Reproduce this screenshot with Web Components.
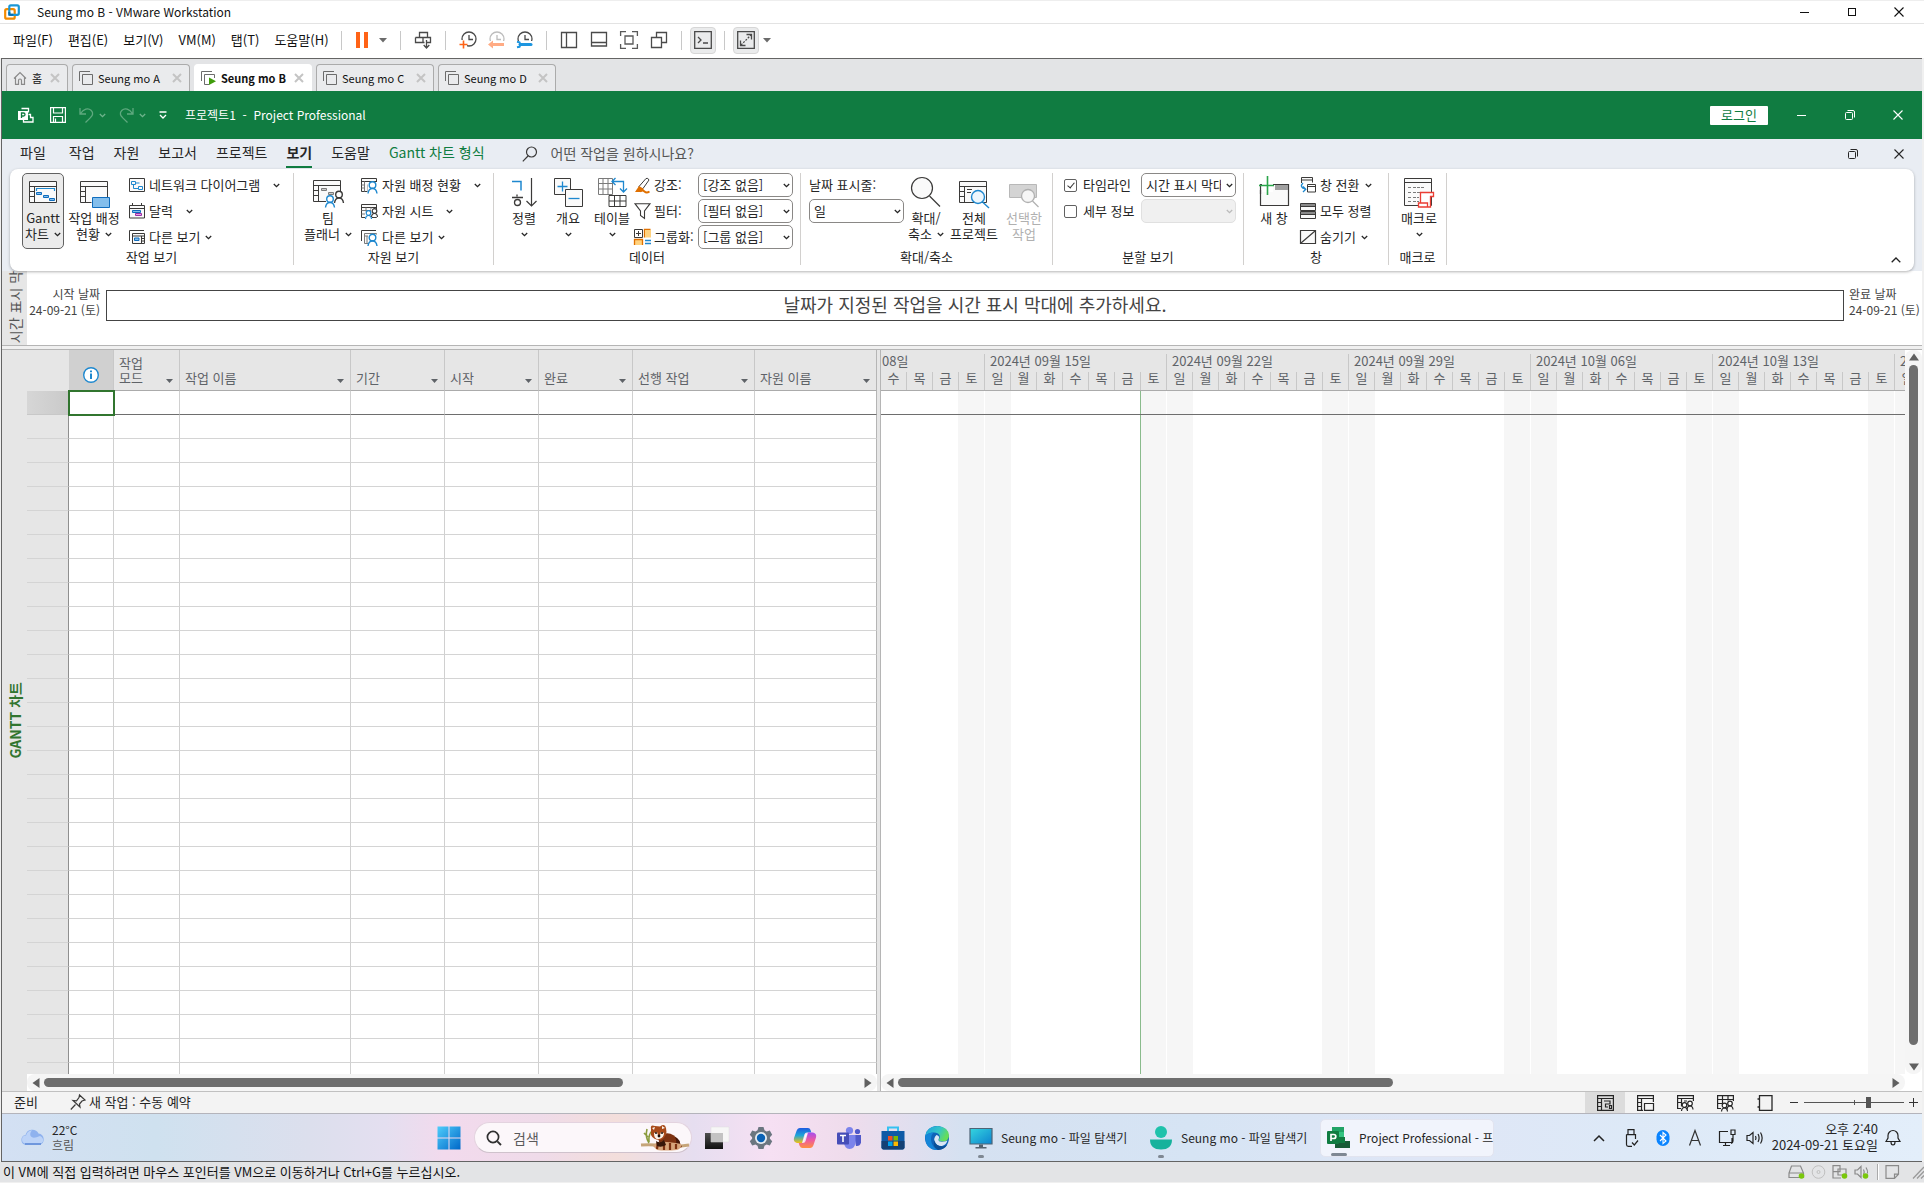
<!DOCTYPE html>
<html lang="ko">
<head>
<meta charset="utf-8">
<title>Seung mo B - VMware Workstation</title>
<style>
html,body{margin:0;height:100%}
body{font:13px/16px "Noto Sans CJK KR","Liberation Sans",sans-serif;font-feature-settings:"calt" 0;color:#262626;background:#f0f0f0;overflow:hidden}
</style>
</head>
<body>
<vm-window></vm-window>
<script>
const D='#3b3a39',B='#1e88cf',G='#7a7a7a';
const person=(x,y,c)=>`<circle cx="${x}" cy="${y}" r="3.3" fill="#fff" stroke="${c}" stroke-width="1.4"/><path d="M${x-4.5} ${y+8.5}c.4-3.4 2-5 4.500-5s4.100 1.600 4.500 5" fill="none" stroke="${c}" stroke-width="1.4"/>`;
const sperson=(x,y,c)=>`<circle cx="${x}" cy="${y}" r="2.300" fill="#fff" stroke="${c}" stroke-width="1.200"/><path d="M${x-3} ${y+6}c.2-2.400 1.200-3.500 3-3.500s2.800 1.100 3 3.500" fill="none" stroke="${c}" stroke-width="1.200"/>`;
const sheet=`<path d="M1.500 4.500h27v21h-27zM1.500 9.500h27M6.500 9.500v16M1.500 14.500h5M1.500 19.500h5" fill="#fafafa" stroke="${D}"/>`;
const tiny=`<path d="M.5 1.500h15v13H.5zM.5 4.500h15" fill="#fafafa" stroke="${D}"/>`;
const clock=c=>`<circle cx="10" cy="8" r="7" fill="none" stroke="${c}" stroke-width="1.300"/><path d="M10 4v4.500h4" fill="none" stroke="${c}" stroke-width="1.300"/>`;
const ICONS={
 vmware:[16,16,`<rect x="1.200" y="5.200" width="9.500" height="9.500" rx="1.500" fill="none" stroke="#f38b00" stroke-width="2.200"/><rect x="5.300" y="1.300" width="9.500" height="9.500" rx="1.500" fill="none" stroke="#1b97d5" stroke-width="2.200"/><path d="M5.300 8v2.800h4" fill="none" stroke="#0b6fae" stroke-width="2"/>`],
 min:[12,12,`<path d="M1 6.500h9" stroke="currentColor"/>`],
 max:[12,12,`<rect x="2.500" y="2.500" width="7" height="7" fill="none" stroke="currentColor"/>`],
 restore:[12,12,`<rect x="1.500" y="3.500" width="7" height="7" rx="1" fill="none" stroke="currentColor"/><path d="M3.500 1.500h5.500q1.500 0 1.500 1.500v5.500" fill="none" stroke="currentColor"/>`],
 close:[12,12,`<path d="M1.500 1.500l9 9M10.500 1.500l-9 9" stroke="currentColor" stroke-width="1.100"/>`],
 pause:[14,16,`<path d="M1 0h4v16H1zM9 0h4v16H9z" fill="#ff6316"/>`],
 tri:[8,5,`<path d="M0 0h8L4 4.500z" fill="#6b6b6b"/>`],
 send:[18,18,`<path d="M5.500 1.500h8v5h-8zM1.500 6.500h15v5h-4M1.500 6.500v5h9M9 6.500v5M12.500 9v7.500M9.700 14l2.800 3 2.800-3" fill="none" stroke="#4a4a4a" stroke-width="1.300"/>`],
 snap:[18,18,clock('#4a4a4a')+`<path d="M0 9h8v8H0z" fill="#fff"/><path d="M4.500 9.500v8M.5 13.500h8" stroke="#ff6316" stroke-width="1.600"/>`],
 revert:[18,18,clock('#bdbdbd')+`<path d="M0 10h18v8H0z" fill="#fff"/><path d="M6 12v-2.500l-5 4 5 4V15h11v-3z" fill="#ffab84"/>`],
 manage:[18,18,clock('#4a4a4a')+`<path d="M0 10h18v8H0z" fill="#fff"/><path d="M5 13.500h11" stroke="#1d96e0" stroke-width="3" stroke-linecap="round"/><path d="M2 10.800l2.500.5 1 2.200-1 2.300-2.500.5" fill="none" stroke="#1d96e0" stroke-width="2"/>`],
 side:[18,18,`<path d="M1.500 1.500h15v15h-15zM6.500 1.500v15" fill="none" stroke="#4a4a4a" stroke-width="1.300"/>`],
 thumbs:[18,18,`<path d="M1.500 1.500h15v13.500h-15zM1.500 11.500h15" fill="none" stroke="#4a4a4a" stroke-width="1.300"/>`],
 full:[18,18,`<path d="M.6 5V.6H6M12 .6h5.400V5M17.400 13v4.400H12M6 17.400H.6V13M5 5h8v8H5z" fill="none" stroke="#5a5a5a" stroke-width="1.300"/>`],
 unity:[18,18,`<path d="M1.500 6.500h10v10h-10zM6.500 6V1.500h10v10H12" fill="none" stroke="#4a4a4a" stroke-width="1.300"/>`],
 console:[18,18,`<path d="M.7.700h16.600v16.600H.7zM4 6l3 3-3 3M9 12h5" fill="none" stroke="#4a4a4a" stroke-width="1.300"/>`],
 stretch:[18,18,`<path d="M.7.700h16.600v16.600H.7zM9.500 3.500h5v5M8.500 14.500h-5v-5" fill="none" stroke="#4a4a4a" stroke-width="1.300"/><path d="M4 14L14 4" stroke="#4a4a4a" stroke-width="1.200" stroke-dasharray="2 1.200"/>`],
 home:[14,14,`<path d="M1 7.500L7 1.500l6 6M2.500 6.500v6.800h3V9.500a1.500 1.500 0 013 0v3.800h3V6.500" fill="none" stroke="#8a8a8a" stroke-width="1.200"/>`],
 vmtab:[14,14,`<path d="M.5 10V.5H11M3.500 3.500h10v10h-10z" fill="none" stroke="#6c6c6c"/>`],
 vmrun:[15,14,`<path d="M.5 10V.5H11M13.500 7V3.500h-10v10H8" fill="none" stroke="#6c6c6c"/><path d="M8 6.500l7 3.800-7 3.700z" fill="#3f9c0c"/>`],
 tabx:[10,10,`<path d="M1 1l8 8M9 1L1 9" stroke="#c4c4c4" stroke-width="2"/>`],
 project:[16,16,`<path d="M3.500 1.500h7v4M10.500 7.500h2v3h2.500v4.500H5.500v-3" fill="none" stroke="#fff" stroke-width="1.300"/><rect y="4" width="10" height="9" fill="#fff"/><path d="M3.500 11V6h2a1.500 1.500 0 010 3h-2" fill="none" stroke="#107c41" stroke-width="1.300"/>`],
 save:[16,16,`<path d="M.6.600h14.800v14.800H.6zM3.500.600v5.400h9V.6M3.500 15.400V9.500h9v5.900M5.500 15v-3.500" fill="none" stroke="#fff" stroke-width="1.200"/>`],
 undo:[15,16,`<path d="M1 1v6h6M1.500 6.500C4.500 2 9 .5 12 3.200c2.600 2.500 1.800 5.300-.5 7.400L6.500 15.500" fill="none" stroke="#5fa97f" stroke-width="1.300"/>`],
 redo:[15,16,`<path d="M14 1v6H8M13.500 6.500C10.500 2 6 .5 3 3.200.4 5.700 1.200 8.500 3.500 10.600L8.500 15.500" fill="none" stroke="#5fa97f" stroke-width="1.300"/>`],
 chev:[7,5,`<path d="M.8 1l2.700 2.700L6.200 1" fill="none" stroke="currentColor" stroke-width="1.300"/>`],
 custom:[8,8,`<path d="M.5 1h7M1 4l3 3 3-3" fill="none" stroke="#fff" stroke-width="1.300"/>`],
 find:[16,16,`<circle cx="9.500" cy="6" r="5" fill="none" stroke="${D}" stroke-width="1.200"/><path d="M6 10L.8 15.300" stroke="${D}" stroke-width="1.200"/>`],
 gantt:[30,30,sheet+`<path d="M8.500 14v-2.500h18V14" fill="none" stroke="${B}" stroke-width="1.200"/><path d="M8.500 15.500h5v2h-5zM15.500 18.500h5v2h-5zM21.500 21.500h5v2h-5z" fill="#83beec" stroke="#0f6cbd"/>`],
 usage:[32,30,`<g transform="translate(1)">${sheet}<path d="M12.500 20h19v11h-19z" fill="#fff"/><path d="M13.500 20.500h17v10h-17z" fill="#83beec" stroke="#0f6cbd"/></g>`],
 network:[16,16,`<path d="M.5 1.500h15v13H.5z" fill="#fafafa" stroke="${D}"/><path d="M2.500 4.500h4v3h-4zM9.500 9.500h4v3h-4zM4.500 7.500v4h5M6.500 6h4" fill="none" stroke="${B}"/>`],
 calendar:[16,16,`<path d="M.5 2.500h15v12.500H.5zM.5 5.500h15M3.500 0v3M12.500 0v3" fill="#fafafa" stroke="${D}"/><path d="M3.500 7.500h8v2h-8z" fill="#83beec" stroke="#0f6cbd"/><path d="M6.500 10.500h6v2h-6z" fill="#e3a5e3" stroke="#9c2ea8"/>`],
 otherview:[16,16,`<path d="M.5 12V1.500H15" fill="none" stroke="${D}"/><path d="M3.500 4.500h12v10h-12zM3.500 7h12M12.500 7v7M12.500 9.500h3M12.500 12h3" fill="#fafafa" stroke="${D}"/><path d="M5.500 9h4.500v2.500H5.500z" fill="#83beec" stroke="#0f6cbd"/>`],
 team:[32,32,sheet+`<path d="M9.500 12.500h5v2h-5zM16.500 16.500h5v2h-5z" fill="#ccc" stroke="${G}"/><path d="M14 20h18v12H14zM23 15h9v8h-9z" fill="#fff"/>${person(18,23,B)}${person(27,18.500,D)}`],
 resusage:[17,16,tiny+`<path d="M3.500 4.500v10M.5 8h3M.5 11h3M6.500 7.500v7" stroke="${G}"/><path d="M6.500 5h10.500v11H6.500z" fill="#fff"/>${person(11.500,8,B)}`],
 ressheet:[17,16,tiny+`<path d="M.5 7.500h15M.5 11h15M5 4.500v10M10 4.500v10" stroke="${G}"/><path d="M4 8.500h7v7.500H4zM10 6h7v8h-7z" fill="#fff"/>${sperson(7.500,10,B)}${sperson(13.500,8,D)}`],
 resother:[17,16,`<path d="M.5 12V1.500H15" fill="none" stroke="${D}"/><path d="M3.500 4.500h12v10h-12zM3.500 7h12M6 7v7" fill="#fafafa" stroke="${G}"/><path d="M7 5.500h10V16H7z" fill="#fff"/>${person(11.500,8.500,B)}`],
 sort:[30,30,`<path d="M3 4.500h9v9" fill="none" stroke="${B}" stroke-width="1.500"/><path d="M8 17.500v2M3 20.500h11" stroke="${D}" stroke-width="1.300"/><circle cx="8.500" cy="25.500" r="3" fill="none" stroke="${D}" stroke-width="1.300"/><path d="M22.500 1v28M17.500 24l5 5 5-5" fill="none" stroke="${D}" stroke-width="1.200"/>`],
 outline:[30,30,`<path d="M1.500 1.500h16v16h-16z" fill="#fafafa" stroke="${D}"/><path d="M4.500 9.500h10M9.500 4.500v10" stroke="${B}" stroke-width="1.300"/><path d="M12.500 12.500h17v17h-17z" fill="#fafafa" stroke="${D}"/><path d="M15.500 21.500h11" stroke="${B}" stroke-width="1.300"/>`],
 tables:[30,30,`<path d="M1.500 1.500h14v16h-14zM1.500 6.500h14M1.500 12h14M6 1.500v16M11 1.500v16" fill="none" stroke="${G}"/><path d="M12 18.500h17v11H12zM12 24h17M17.500 18.500v11M23 18.500v11" fill="#fff" stroke="${D}"/><path d="M15 4.500h11.500v10M18.500 1L15 4.500 18.500 8M23 11.500l3.500 3.500 3.500-3.500" fill="none" stroke="${B}" stroke-width="1.300"/>`],
 highlight:[17,16,`<path d="M5 9.500L12 1.500q2-1 3 1.500L9 11.500l-3 .5z" fill="#fff" stroke="${D}"/><path d="M5 9l-4 6h6l3-3z" fill="#e07000"/><path d="M6 14.500q2.500-2 4.500 0t5 0" fill="none" stroke="#e07000" stroke-width="1.800"/>`],
 filter:[17,16,`<path d="M1 .7h15L10.500 8v7.500L6.500 12.500V8z" fill="none" stroke="${D}" stroke-width="1.100"/>`],
 group:[17,16,`<path d="M.5.500h8v8h-8zM2 4.500h5M4.500 2v5" fill="#fff" stroke="${D}"/><path d="M16.500.500h-6v8M.5 16v-5.500h8V16" fill="#ffd27f" stroke="#e07000" stroke-width="1.300"/><path d="M11 1h6v7.500h-6z" fill="#ffd27f"/><path d="M11 11.500h6M11 14.500h6" stroke="${B}" stroke-width="1.300"/>`],
 zoom:[32,32,`<circle cx="12" cy="12" r="10.500" fill="#fafafa" stroke="${D}" stroke-width="1.200"/><path d="M19.500 20L30 30.500" stroke="${D}" stroke-width="1.300"/>`],
 wholeproj:[32,30,sheet+`<path d="M9 12.500h5M9 15.500h4" stroke="${D}"/><circle cx="20" cy="20" r="6.500" fill="#eef7fd" stroke="${B}" stroke-width="1.400"/><path d="M24.500 25L31 31" stroke="${B}" stroke-width="1.400"/>`],
 seltask:[32,30,`<path d="M1.500 7.500h27v13h-27z" fill="#d4d4d4" stroke="#b8b8b8"/><circle cx="20" cy="19" r="6.500" fill="#f6f6f6" stroke="#b0b0b0" stroke-width="1.300"/><path d="M24.500 24L30.500 30" stroke="#b0b0b0" stroke-width="1.300"/>`],
 newwin:[30,32,`<path d="M1.500 8.500h28v21h-28z" fill="#fafafa" stroke="${D}" stroke-width="1.200"/><path d="M16 9h13v5H16z" fill="#a0a0a0"/><path d="M0 4h14v12H3V6z" fill="#fff"/><path d="M1.500 14v4" stroke="${D}" stroke-width="1.200"/><path d="M8.500 0v19M0 9.500h15" stroke="#2ba54b" stroke-width="1.600"/>`],
 switchwin:[16,16,`<path d="M1.500 6V.5h11v5" fill="#fafafa" stroke="${D}"/><path d="M2 3h10M8 9.500h8" stroke="${D}"/><path d="M7.500 7.500h8V15h-8z" fill="none" stroke="${D}"/><path d="M3 6q-4 4 2 6M3 9.500l2.800 2.700L3 15" fill="none" stroke="${B}" stroke-width="1.300"/>`],
 arrange:[16,16,`<path d="M.5.500h15v7H.5zM.5 8.500h15v7H.5z" fill="#fafafa" stroke="${D}"/><path d="M1 2h14M1 10h14" stroke="#8a8a8a" stroke-width="2"/><path d="M1 3.500h14M1 11.500h14" stroke="${D}"/>`],
 hide:[16,16,`<path d="M.5 1.500h15v13H.5zM1 14L15 2" fill="#fafafa" stroke="${D}" stroke-width="1.200"/>`],
 macro:[32,32,`<path d="M1.500 2.500h27v27h-27zM1.500 6.500h27" fill="#fafafa" stroke="${D}"/><path d="M5 11.500h3M10 11.500h12M5 16.500h3M10 16.500h8M5 21.500h3M10 21.500h6M5 25.500h3M10 25.500h6" stroke="${G}" stroke-dasharray="3 1"/><path d="M17.500 27V16.500h13v4h-3V31H15.500v-4h9v4" fill="#fff" stroke="#ea3e34" stroke-width="1.300"/>`],
 info:[18,18,`<circle cx="9" cy="9" r="7.300" fill="#fff" stroke="${B}" stroke-width="1.400"/><path d="M9 7.500V13M9 4.500v1.700" stroke="${B}" stroke-width="2"/>`],
 pin:[16,16,`<path d="M9.500 1l5.500 5-3 1-2.500 3 .5 3-7-6.500 3.500.3L9 3.500zM5.500 10.500L.8 15.500" fill="none" stroke="${D}" stroke-width="1.200"/>`],
 vgantt:[17,16,`<path d="M.6.600h15.800v14.800H.6zM.6 3.500h15.800M4.500 3.500v12M.6 7.500h4M.6 11.500h4M7 6h6v3H8.500v3H11M12.500 10.500h2v3h-2z" fill="none" stroke="#262626" stroke-width="1.200"/>`],
 vusage:[17,16,`<path d="M6 15.400H.6V.6h15.800V7M.6 3.500h15.800M4.500 3.500v12M.6 7.500h4M.6 11.500h4M7.500 8.500h9v6.900h-9z" fill="none" stroke="#262626" stroke-width="1.200"/>`],
 vteam:[17,16,`<path d="M4 13.500H.6V.6h15.800V6M.6 3.500h15.800M4.500 3.500v8M.6 7.500h4M7 6h3" fill="none" stroke="#262626" stroke-width="1.200"/>${sperson(7.500,10,'#262626')}${sperson(13,8.500,'#262626')}`],
 vsheet:[17,16,`<path d="M4 13.500H.6V.6h15.800V6M.6 4.500h15.800M.6 8.500h8M5.500.600v8M11 .6v5" fill="none" stroke="#262626" stroke-width="1.200"/>${sperson(7.500,10.500,'#262626')}${sperson(13,8.500,'#262626')}`],
 vreport:[16,16,`<path d="M2.500.600h12.500v14.800H2.500zM.5 4h2M.5 12h2" fill="none" stroke="#262626" stroke-width="1.300"/>`],
 cloud:[26,18,`<path d="M6 17a5 5 0 01-.5-9.900A7 7 0 0118.500 5.500 5.900 5.900 0 0119.500 17z" fill="#8fb2ee"/><path d="M6 15.500a4 4 0 010-8q1.500-5 6-5.200Q9 6 11 8.500T20 8q4 2 3 5.500-1 2-3.500 2z" fill="#bcd3f8"/><path d="M5 16h16" stroke="#6f97dd" stroke-width="2"/>`],
 start:[24,24,`<defs><linearGradient id="w" x2="1" y2="1"><stop stop-color="#4fcdfb"/><stop offset="1" stop-color="#0067c8"/></linearGradient></defs><path d="M.5.500h11v11H.5zM12.500.500h11v11h-11zM.5 12.500h11v11H.5zM12.500 12.500h11v11h-11z" fill="url(#w)"/>`],
 wfind:[16,16,`<circle cx="7" cy="7" r="5.600" fill="none" stroke="#303030" stroke-width="1.700"/><path d="M11.300 11.300l3.700 3.700" stroke="#303030" stroke-width="1.900"/>`],
 panda:[48,26,`<path d="M0 20q12-1 20 1t28-1" stroke="#c6a57a" stroke-width="3" fill="none"/><path d="M8 18Q4 12 6 4M8 17q-1-8 4-12M7 12L3 8" stroke="#8a9b3d" stroke-width="1.600" fill="none"/><path d="M17 12q12-9 21 4l3 6q-12 5-22 0z" fill="#7d3212"/><path d="M34 12q6 2 5 10l-6 2q4-6 1-12z" fill="#47190a"/><path d="M12 21q4-5 14-4t14 2q1 4-4 6-12 1-20 0z" fill="#d7a57c"/><path d="M17 17l-1 7M23 17v8M29 18v7M35 19v5" stroke="#7d3212" stroke-width="2.200"/><path d="M10 4q-1-5 4-3l5 .5q5-3.500 6 1.500 2 8-5 12-8 0-10-5z" fill="#a84a1a"/><path d="M11 3l3-1-1 3zM24 3l-3-2v3zM13 8l3-1 1 3h2l1-3 3 1q0 5-5 6t-5-6z" fill="#fbf3ea"/><circle cx="15" cy="8" r="1" fill="#1d0f08"/><circle cx="21" cy="8" r="1" fill="#1d0f08"/><circle cx="18" cy="11" r="1.400" fill="#1d0f08"/><path d="M15 16q4 3 8-1l2 5q-5 3-9 1z" fill="#36160a"/>`],
 taskview:[24,24,`<defs><linearGradient id="k" y2="1" x2="0"><stop stop-color="#4e4e4e"/><stop offset="1" stop-color="#111"/></linearGradient></defs><path d="M0 7h18v16H0z" fill="url(#k)"/><path d="M6 1h18v15H6z" fill="#f6f6f6" stroke="#ddd" stroke-width=".5"/><path d="M6 7h12v9H6z" fill="#c3c3c3"/>`],
 gear:[24,24,`<path d="M9.500 1h5l1 3.200 2 1.200 3.300-.9 2.400 4.300-2.300 2.400v1.600l2.300 2.400-2.400 4.300-3.300-.9-2 1.200-1 3.200h-5l-1-3.200-2-1.200-3.300.9L.8 15.200l2.300-2.400v-1.600L.8 8.800l2.400-4.300 3.300.9 2-1.200z" fill="#6b7680"/><circle cx="12" cy="12" r="6" fill="#e7edf2"/><circle cx="12" cy="12" r="4.200" fill="#0a62b5"/>`],
 copilot:[24,24,`<defs><linearGradient id="c1" x2="0" y2="1"><stop stop-color="#1d5be0"/><stop offset=".5" stop-color="#1fa6d8"/><stop offset="1" stop-color="#f4c20f"/></linearGradient><linearGradient id="c2" x2="0" y2="1"><stop stop-color="#a44ef0"/><stop offset=".5" stop-color="#ee5aa0"/><stop offset="1" stop-color="#ff8f3e"/></linearGradient></defs><path d="M7 2h8q2 0 2.500 2l.8 2.500H14q-2 0-2.600 2L9 17H4q-4-1-3-5L3.500 5Q4.500 2 7 2z" fill="url(#c1)"/><path d="M17 22H9.500q-2 0-3-2.500L5.700 17H10q2 0 2.600-2L15 6.500h5q4 1 3 5L20.500 19q-1 3-3.500 3z" fill="url(#c2)"/><path d="M14 8l-3.500 8H10l2.700-8z" fill="#fff"/>`],
 teams:[24,24,`<circle cx="12.500" cy="4.500" r="3.600" fill="#7b83eb"/><circle cx="20.500" cy="5.500" r="2.600" fill="#5059c9"/><path d="M17 9h7v7.500q-1 4-5 3.500z" fill="#5059c9"/><path d="M7 9h11.500v8q-.5 5.500-6 6-5-.5-5.500-6z" fill="#7b83eb"/><rect y="6.500" width="12" height="12" rx="1" fill="#464eb8"/><path d="M3 9.500h6M6 9.500v6.500" stroke="#fff" stroke-width="1.600"/>`],
 store:[24,24,`<path d="M7 6V1.500h10V6" fill="none" stroke="#35c1f1" stroke-width="2"/><path d="M.5 5h23v16.500q0 2-2 2h-19q-2 0-2-2z" fill="#0f5aa6"/><path d="M.5 15h23v6.500q0 2-2 2h-19q-2 0-2-2z" fill="#154175"/><path d="M7 10h4.500v4.500H7z" fill="#f25022"/><path d="M12.500 10H17v4.500h-4.500z" fill="#7fba00"/><path d="M7 15.500h4.500V20H7z" fill="#00a4ef"/><path d="M12.500 15.500H17V20h-4.500z" fill="#ffb900"/>`],
 edge:[24,24,`<defs><linearGradient id="e" x2="1" y2=".4"><stop stop-color="#1aa0e0"/><stop offset=".6" stop-color="#35c5c8"/><stop offset="1" stop-color="#66de58"/></linearGradient></defs><circle cx="12" cy="12" r="12" fill="#0f63b8"/><path d="M.3 10Q2 0 12.500 0 24 1 24 10q-.5 5.500-6.500 5.500-4 0-4-2.200 2-1.500 1-4Q13 6.500 9 6.500 3 6.500.3 10z" fill="url(#e)"/><path d="M.2 10Q3 6.500 9 6.500q-3 1.500-3 7Q6.500 21 13 24 0 24 .2 10z" fill="#1485d8"/><path d="M13.500 13.300q-.5 2.700 4 2.500 4-.3 5-1.300Q21 19 17 20q-5 .5-7.500-4-1.200-4 2-7 4 1.500 2 4.300z" fill="#d9e6f4"/><path d="M9.500 14q1 6 8 6.500 2 0 5-2-3 5-9.500 5.500Q7 21 9.500 14z" fill="#0b4f96"/>`],
 monitor:[24,24,`<defs><linearGradient id="m" x2="1" y2="1"><stop stop-color="#35d6df"/><stop offset="1" stop-color="#0d83cf"/></linearGradient></defs><path d="M1 2.500h22v15.500H1z" fill="url(#m)" stroke="#4e6476" stroke-width="1.200"/><path d="M10 18.500h4V21h3.500v1.500h-11V21H10z" fill="#54626e"/>`],
 user:[24,24,`<ellipse cx="12" cy="6" rx="6" ry="6" fill="#1fc2ab"/><path d="M1 13.500h22q0 10-11 10T1 13.500z" fill="#17b29c"/>`],
 projapp:[24,24,`<path d="M5 1h12v12H5z" fill="#21a366"/><path d="M17 6h-6v9h6z" fill="#33c481"/><path d="M8 15h15v7H8z" fill="#185c37"/><path d="M10 11h8v6h-8z" fill="#107c41"/><rect y="5" width="12" height="13" rx="1" fill="#107c41"/><path d="M4 15V8.500h2.800a2 2 0 010 4H4" fill="none" stroke="#fff" stroke-width="1.700"/>`],
 up:[12,8,`<path d="M1 7l5-5 5 5" fill="none" stroke="#222" stroke-width="1.500"/>`],
 up2:[10,6,`<path d="M.7 5.300L5 1l4.300 4.300" fill="none" stroke="#222" stroke-width="1.300"/>`],
 usb:[14,18,`<path d="M4 .6h6v5H4zM2.500 5.600h9V10M2.500 5.600v10q0 1.800 1.800 1.800H8M8 13.500l2.300 2.500L14 11.500" fill="none" stroke="#222" stroke-width="1.200"/>`],
 bt:[14,18,`<rect x=".5" y="1" width="13" height="16" rx="6.500" fill="#0a84ff"/><path d="M4 6l6 6-3 2.500v-11L10 6l-6 6" fill="none" stroke="#fff" stroke-width="1.100"/>`],
 ime:[14,18,`<path d="M1.500 16.500L7 1.500l5.500 15M3.500 11.500h7" fill="none" stroke="#333" stroke-width="1.200"/>`],
 net:[18,18,`<path d="M10 2.500H1.500v11H14V9M5 16.500h7M7.500 13.500v3M13 1h4v4.500h-4zM15 5.500V12q0 2-2 2.500" fill="none" stroke="#222" stroke-width="1.200"/>`],
 vol:[18,16,`<path d="M1 5.500h2.500L7 2.500v11L3.500 10.500H1zM9.500 6q1 2 0 4M12 4q2.200 4 0 8M14.500 2.500q3.300 5.500 0 11" fill="none" stroke="#222" stroke-width="1.200"/>`],
 bell:[16,18,`<path d="M1 12.500L3 9V6.500a5 5 0 0110 0V9l2 3.500zM6 13q0 3 2 3t2-3" fill="none" stroke="#222" stroke-width="1.200"/>`],
 disk:[17,14,`<path d="M3.500 1h9L15.500 8v4.500H1V8z M1 8h14.500" fill="none" stroke="#8a8a8a" stroke-width="1.200"/><circle cx="13.500" cy="11" r="2.800" fill="#7ac70c"/>`],
 cd:[15,14,`<circle cx="7.500" cy="7" r="6.300" fill="none" stroke="#c0c0c0"/><circle cx="7.500" cy="7" r="1.500" fill="none" stroke="#c0c0c0"/>`],
 lan:[16,14,`<path d="M1 .7h7v6H1zM6 9V4h8v6H6zM1 7v6h8" fill="none" stroke="#8a8a8a" stroke-width="1.200"/><circle cx="12.500" cy="11" r="2.800" fill="#7ac70c"/>`],
 snd:[15,14,`<path d="M1 5h2.500L7 1.500v11L3.500 9H1zM9.500 4.500q1.500 2.500 0 5M12 2.500q2 3 1.500 6" fill="none" stroke="#8a8a8a" stroke-width="1.200"/><circle cx="11.500" cy="11" r="2.800" fill="#7ac70c"/>`],
 note:[15,14,`<path d="M1 .7h12.500v8.500L9.500 13.300H1zM13.500 9.200h-4v4" fill="none" stroke="#8a8a8a" stroke-width="1.200"/>`],
 grip:[12,14,`<path d="M1 13.500L12 2M5 13.500l7-7.300M9 13.500l3-3" stroke="#9a9a9a" stroke-width="1.300"/>`],
 drop:[7,4,`<path d="M0 0h7L3.500 4z" fill="#5f6368"/>`],
 aleft:[8,10,`<path d="M7.500 0v10L.5 5z" fill="#606060"/>`],
 aright:[8,10,`<path d="M.5 0v10l7-5z" fill="#606060"/>`],
 aup:[10,8,`<path d="M0 7.500h10L5 .5z" fill="#606060"/>`],
 adown:[10,8,`<path d="M0 .5h10L5 7.500z" fill="#606060"/>`]
};
const BASE=`*{box-sizing:border-box}:host{display:block}button,input,select{font:inherit;color:inherit;background:none;border:0;padding:0;margin:0;outline:0}button{display:inline-flex;align-items:center;justify-content:center;white-space:nowrap}`;
function define(name,css,html,ready){
  const t=document.createElement('template');
  t.innerHTML=`<style>${BASE}${css}</style>${html}`;
  customElements.define(name,class extends HTMLElement{
    connectedCallback(){
      if(this.shadowRoot)return;
      const r=this.attachShadow({mode:'open'});
      r.append(t.content.cloneNode(true));
      if(ready)ready(this,r);
    }
  });
}
const fill=(h,r)=>r.querySelectorAll('[data-a]').forEach(e=>e.textContent=h.getAttribute(e.dataset.a)||'');
function icon(name,cls){
  const i=document.createElement('ui-icon');
  i.setAttribute('name',name);
  if(cls)i.className=cls;
  return i;
}

define('ui-icon',`:host{display:inline-flex;flex:none}svg{display:block;overflow:visible}`,``,(h,r)=>{
  const [w,hh,s]=ICONS[h.getAttribute('name')];
  r.innerHTML+=`<svg width="${w}" height="${hh}" viewBox="0 0 ${w} ${hh}" aria-hidden="true">${s}</svg>`;
});

define('vm-titlebar',`:host{display:flex;align-items:center;height:24px;padding:0 2px 0 4px;background:#fff;border-top:1px solid #eee;border-bottom:1px solid #e3e3e3;color:#111;font-size:12px}span{margin-left:17px}.b{display:flex;margin-left:auto}.b button{width:47px}`,
 `<ui-icon name="vmware"></ui-icon><span>Seung mo B - VMware Workstation</span><div class="b"><button aria-label="최소화"><ui-icon name="min"></ui-icon></button><button aria-label="최대화"><ui-icon name="max"></ui-icon></button><button aria-label="닫기"><ui-icon name="close"></ui-icon></button></div>`);

define('vm-menubar',`:host{display:flex;align-items:center;height:34px;padding:0 0 2px 13px;background:#fff;color:#111}nav{display:flex;gap:15px;margin-right:12px}i{width:1px;height:19px;background:#c8c8c8;flex:none}.g{display:flex;align-items:center;gap:12px;padding:0 13px}.n{gap:10px}.on{width:26px;height:27px;background:#eaebec;border:1px solid #d6d6d6;border-radius:4px}.p{padding:0 8px;gap:4px}`,
 `<nav><button>파일(F)</button><button>편집(E)</button><button>보기(V)</button><button>VM(M)</button><button>탭(T)</button><button>도움말(H)</button></nav><i></i>
 <div class="g n"><button aria-label="일시 중단"><ui-icon name="pause"></ui-icon></button><button aria-label="전원"><ui-icon name="tri"></ui-icon></button></div><i></i>
 <div class="g"><button aria-label="보내기"><ui-icon name="send"></ui-icon></button></div><i></i>
 <div class="g n"><button aria-label="스냅샷"><ui-icon name="snap"></ui-icon></button><button aria-label="되돌리기"><ui-icon name="revert"></ui-icon></button><button aria-label="관리"><ui-icon name="manage"></ui-icon></button></div><i></i>
 <div class="g"><button aria-label="라이브러리"><ui-icon name="side"></ui-icon></button><button aria-label="축소판"><ui-icon name="thumbs"></ui-icon></button><button aria-label="전체 화면"><ui-icon name="full"></ui-icon></button><button aria-label="Unity"><ui-icon name="unity"></ui-icon></button></div><i></i>
 <div class="g p"><button class="on" aria-label="콘솔"><ui-icon name="console"></ui-icon></button></div><i></i>
 <div class="g p"><button class="on" aria-label="늘이기"><ui-icon name="stretch"></ui-icon></button><button aria-label="늘이기 옵션"><ui-icon name="tri"></ui-icon></button></div>`);

define('vm-tab',`:host{display:flex;align-items:center;width:118px;height:27px;padding:0 7px 0 6px;background:#eaebed;border:1px solid #ababab;border-bottom:0;border-radius:4px 4px 0 0;font-size:11px;color:#111}:host([active]){background:#fff;border-color:#fff;font-weight:700}:host([small]){width:62px}span{margin-left:5px;white-space:nowrap}button{margin-left:auto}`,
 `<span class="i"></span><span><slot></slot></span><button aria-label="탭 닫기"><ui-icon name="tabx"></ui-icon></button>`,
 (h,r)=>r.querySelector('.i').replaceWith(icon(h.getAttribute('icon')||'vmtab')));
define('vm-tabs',`:host{display:flex;align-items:flex-end;gap:4px;height:32px;padding-left:4px;background:#e3e4e6}`,
 `<vm-tab small icon="home">홈</vm-tab><vm-tab>Seung mo A</vm-tab><vm-tab active icon="vmrun">Seung mo B</vm-tab><vm-tab>Seung mo C</vm-tab><vm-tab>Seung mo D</vm-tab>`);

define('pj-titlebar',`:host{display:flex;align-items:center;height:48px;padding-left:16px;background:#107c41;color:#fff;font-size:12px}.q{display:flex;align-items:center;gap:13px;margin-right:18px}.s{gap:5px;color:#6fb48c}.q>ui-icon{margin-right:3px}.login{margin-left:auto;width:58px;height:19px;background:#fff;color:#107c41;border-radius:1px;margin-right:10px;font-size:13px}.w{width:48px;height:48px}pre{font:inherit;margin:0}`,
 `<div class="q"><ui-icon name="project"></ui-icon><button aria-label="저장"><ui-icon name="save"></ui-icon></button><button class="s" aria-label="실행 취소"><ui-icon name="undo"></ui-icon><ui-icon name="chev"></ui-icon></button><button class="s" aria-label="다시 실행"><ui-icon name="redo"></ui-icon><ui-icon name="chev"></ui-icon></button><button aria-label="사용자 지정"><ui-icon name="custom"></ui-icon></button></div>
 <pre>프로젝트1  -  Project Professional</pre><button class="login">로그인</button><button class="w" aria-label="최소화"><ui-icon name="min"></ui-icon></button><button class="w" aria-label="복원"><ui-icon name="restore"></ui-icon></button><button class="w" aria-label="닫기"><ui-icon name="close"></ui-icon></button>`);

define('pj-tabs',`:host{display:flex;align-items:center;height:30px;padding:0 0 1px 18px;background:#e9edf3;font-size:14px}nav{display:flex;gap:19px}nav button{height:28px;padding-bottom:2px;border-bottom:2px solid transparent}nav button:first-child{margin-right:4px}nav .on{font-weight:700;border-bottom-color:#107c41}.c{color:#107c41}label{display:flex;align-items:center;gap:13px;margin-left:37px}input{width:200px;height:20px;padding-bottom:2px;font-size:14px}input::placeholder{color:#555;opacity:1}.e{margin-left:auto;display:flex}.e button{width:46px}`,
 `<nav><button>파일</button><button>작업</button><button>자원</button><button>보고서</button><button>프로젝트</button><button class="on">보기</button><button>도움말</button><button class="c">Gantt 차트 형식</button></nav><label><ui-icon name="find"></ui-icon><input aria-label="검색" placeholder="어떤 작업을 원하시나요?"></label><div class="e"><button aria-label="복원"><ui-icon name="restore"></ui-icon></button><button aria-label="닫기"><ui-icon name="close"></ui-icon></button></div>`);

define('rb-group',`:host{display:flex;flex-direction:column;height:92px;border-right:1px solid #d2d0ce;flex:none}div{display:flex;height:77px;align-items:flex-start;padding-left:var(--lead,8px)}footer{text-align:center;line-height:16px}`,
 `<div><slot></slot></div><footer data-a="label"></footer>`,fill);
define('rb-big',`:host{display:block;flex:none}button{flex-direction:column;justify-content:flex-start;width:100%;height:76px;padding-top:3px;border:1px solid transparent;border-radius:5px}:host([on]) button{background:#ebebeb;border-color:#616161}:host([off]) button{color:#b0b0b0}.i{display:flex;width:32px;height:30px;margin-bottom:3px;justify-content:center;align-items:center}.l{display:flex;align-items:center;gap:5px;height:16px}`,
 `<button><span class="i"></span><span class="l" data-a="l1"></span><span class="l"><span data-a="l2"></span></span></button>`,
 (h,r)=>{fill(h,r);r.querySelector('.i').append(icon(h.getAttribute('icon')));
  const l=r.querySelectorAll('.l')[1]; if(!h.getAttribute('l2'))l.firstChild.remove();
  if(h.hasAttribute('menu'))l.append(icon('chev'));
  if(h.hasAttribute('off'))r.querySelector('button').disabled=true;});
define('rb-col',`:host{display:flex;flex-direction:column;gap:2px;flex:none}`,`<slot></slot>`);
define('rb-small',`:host{display:block;height:24px}button{height:24px;gap:4px}.m{margin-left:1px}:host([split]) .m{margin-left:9px}`,
 `<button><span class="i"></span><span data-a="label"></span></button>`,
 (h,r)=>{fill(h,r);r.querySelector('.i').replaceWith(icon(h.getAttribute('icon')));
  if(h.hasAttribute('menu')||h.hasAttribute('split'))r.querySelector('button').append(icon('chev','m'));});
define('rb-select',`:host{display:flex;align-items:center;height:24px}label{display:flex;align-items:center;gap:3px;width:64px;white-space:nowrap}label:empty{display:none}.b{position:relative;width:95px;height:24px}select{appearance:none;width:95px;height:24px;padding:0 14px 0 4px;border:1px solid #8a8886;border-radius:5px;background:#fff}select:disabled{background:#f0f0f0;border-color:#e0e0e0;opacity:1}.b ui-icon{position:absolute;right:3px;top:10px;pointer-events:none}:host([off]){color:#bbb}`,
 `<label for="s"></label><div class="b"><select id="s"><option></option></select><ui-icon name="chev"></ui-icon></div>`,
 (h,r)=>{r.querySelector('option').textContent=h.getAttribute('value')||'';
  if(h.getAttribute('label'))r.querySelector('label').append(icon(h.getAttribute('icon')),h.getAttribute('label'));
  else r.querySelector('select').setAttribute('aria-label',h.getAttribute('name'));
  if(h.hasAttribute('off'))r.querySelector('select').disabled=true;});
define('rb-check',`:host{display:flex;align-items:center;height:24px;width:77px}label{display:flex;align-items:center;gap:6px;white-space:nowrap}input{appearance:none;position:relative;width:13px;height:13px;border:1px solid #616161;border-radius:2px;background:#fff;flex:none}input:checked::after{content:"";position:absolute;left:4px;top:1px;width:3px;height:6px;border:solid #333;border-width:0 1px 1px 0;transform:rotate(40deg)}`,
 `<label><input type="checkbox"><slot></slot></label>`,(h,r)=>{r.querySelector('input').checked=h.hasAttribute('checked')});
define('pj-ribbon',`:host{display:block;background:#e9edf3;padding:0 8px;height:102px;position:relative;z-index:2}.c{display:flex;height:102px;padding-top:4px;background:#fff;border-radius:8px;box-shadow:0 1px 3px rgba(0,0,0,.3)}.x{align-self:flex-end;width:20px;height:14px;margin:0 8px 4px auto}.lab{height:24px;line-height:24px}`,
 `<div class="c">
 <rb-group label="작업 보기" style="width:284px;--lead:12px"><rb-big on menu icon="gantt" l1="Gantt" l2="차트" style="width:42px"></rb-big><rb-big menu icon="usage" l1="작업 배정" l2="현황" style="width:60px;margin-right:5px"></rb-big><rb-col><rb-small split icon="network" label="네트워크 다이어그램"></rb-small><rb-small split icon="calendar" label="달력"></rb-small><rb-small menu icon="otherview" label="다른 보기"></rb-small></rb-col></rb-group>
 <rb-group label="자원 보기" style="width:200px"><rb-big menu icon="team" l1="팀" l2="플래너" style="width:52px;margin-right:7px"></rb-big><rb-col><rb-small split icon="resusage" label="자원 배정 현황"></rb-small><rb-small split icon="ressheet" label="자원 시트"></rb-small><rb-small menu icon="resother" label="다른 보기"></rb-small></rb-col></rb-group>
 <rb-group label="데이터" style="width:307px"><rb-big menu icon="sort" l1="정렬" style="width:44px"></rb-big><rb-big menu icon="outline" l1="개요" style="width:44px"></rb-big><rb-big menu icon="tables" l1="테이블" style="width:44px"></rb-big><rb-col><rb-select icon="highlight" label="강조:" value="[강조 없음]"></rb-select><rb-select icon="filter" label="필터:" value="[필터 없음]"></rb-select><rb-select icon="group" label="그룹화:" value="[그룹 없음]"></rb-select></rb-col></rb-group>
 <rb-group label="확대/축소" style="width:252px"><rb-col><span class="lab">날짜 표시줄:</span><rb-select name="날짜 표시줄" value="일"></rb-select></rb-col><rb-big menu icon="zoom" l1="확대/" l2="축소" style="width:44px"></rb-big><rb-big icon="wholeproj" l1="전체" l2="프로젝트" style="width:52px"></rb-big><rb-big off icon="seltask" l1="선택한" l2="작업" style="width:48px"></rb-big></rb-group>
 <rb-group label="분할 보기" style="width:191px;--lead:11px"><rb-col><rb-check checked>타임라인</rb-check><rb-check>세부 정보</rb-check></rb-col><rb-col><rb-select name="타임라인" value="시간 표시 막대"></rb-select><rb-select off name="세부 정보"></rb-select></rb-col></rb-group>
 <rb-group label="창" style="width:145px"><rb-big icon="newwin" l1="새 창" style="width:44px;margin-right:4px"></rb-big><rb-col><rb-small menu icon="switchwin" label="창 전환"></rb-small><rb-small icon="arrange" label="모두 정렬"></rb-small><rb-small menu icon="hide" label="숨기기"></rb-small></rb-col></rb-group>
 <rb-group label="매크로" style="width:58px"><rb-big menu icon="macro" l1="매크로" style="width:44px"></rb-big></rb-group>
 <button class="x" aria-label="리본 축소"><ui-icon name="up2"></ui-icon></button></div>`);

define('side-label',`:host{display:flex;width:25px;flex:none;background:#e6e6e6;align-items:center;justify-content:center;overflow:hidden;color:#555;font-size:14px}span{writing-mode:vertical-rl;text-orientation:sideways;transform:rotate(180deg);white-space:nowrap;line-height:20px}:host([green]){color:#31752f;font-weight:700}:host([end]){align-items:flex-end;padding-bottom:2px}`,`<span><slot></slot></span>`);
define('pj-timeline',`:host{display:flex;height:75px;background:#fff;border-bottom:1px solid #b5b5b5;font-size:12px;color:#444}.d{width:73px;margin-top:15px;text-align:right;white-space:nowrap}.e{width:73px;text-align:left}.b{flex:1;height:31px;margin:19px 5px 0 6px;border:1px solid #444;font-size:18px;line-height:27px;text-align:center;white-space:nowrap}`,
 `<side-label end>시간 표시 막대</side-label><div class="d">시작 날짜<br>24-09-21 (토)</div><div class="b">날짜가 지정된 작업을 시간 표시 막대에 추가하세요.</div><div class="d e">완료 날짜<br>24-09-21 (토)</div>`);

define('scroll-bar',`:host{display:flex;align-items:center;justify-content:space-between;gap:4px;background:#f5f5f5;border-radius:8px;padding:0 5px;flex:none;height:17px}.t{display:flex;flex:1}b{background:#6e6e6e;border-radius:5px;height:9px;flex:0 0 var(--size)}:host([v]){flex-direction:column;width:17px;height:auto;padding:3px 0}:host([v]) .t{flex-direction:column}:host([v]) b{width:9px}`,
 `<span class="s"></span><div class="t"><b></b></div><span class="e"></span>`,(h,r)=>{const v=h.hasAttribute('v');
  r.querySelector('.s').replaceWith(icon(v?'aup':'aleft'));r.querySelector('.e').replaceWith(icon(v?'adown':'aright'));});

define('pj-sheet',`:host{display:flex;flex-direction:column;width:850px;flex:none;background:#fff;overflow:hidden}.v{flex:1;min-height:0;overflow:hidden}table{border-collapse:separate;border-spacing:0;table-layout:fixed;width:850px}th,td{padding:0;border-right:1px solid #d0d0d0;border-bottom:1px solid #d4d4d4;height:24px}thead th{height:41px;background:#e6e6e6;border-bottom-color:#ababab;border-right-color:#c8c8c8;font-weight:400;color:#5f6368;text-align:left;vertical-align:bottom}.h{display:flex;align-items:flex-end;justify-content:space-between;padding:0 6px 5px 5px;line-height:15px}.h ui-icon{margin-bottom:2px}tr>:first-child{background:#e6e6e6;border-right-color:#8f8f8f}thead th:first-child{border-right-color:#e6e6e6;border-bottom-color:#e6e6e6}thead .i{background:#d0d0d0;text-align:center;padding-bottom:6px}.i ui-icon{vertical-align:bottom}tbody tr:first-child>*{border-bottom-color:#6e6e6e}tbody tr:first-child th{background:linear-gradient(90deg,#d6d6d6,#cacaca);border-bottom-color:#c8c8c8}.sel{outline:2px solid #31752f;outline-offset:-1px}tr>:last-child{border-right-color:#b5b5b5}`,
 `<div class="v"><table><colgroup><col style="width:42px"><col style="width:45px"><col style="width:66px"><col style="width:171px"><col style="width:94px"><col style="width:94px"><col style="width:94px"><col style="width:122px"><col style="width:122px"></colgroup><thead><tr><th></th><th class="i"><ui-icon name="info"></ui-icon></th></tr></thead><tbody></tbody></table></div><scroll-bar style="--size:71%"></scroll-bar>`,
 (h,r)=>{const tr=r.querySelector('thead tr');
  for(const n of ['작업<br>모드','작업 이름','기간','시작','완료','선행 작업','자원 이름'])tr.insertAdjacentHTML('beforeend',`<th scope="col"><div class="h"><span>${n}</span><ui-icon name="drop"></ui-icon></div></th>`);
  r.querySelector('tbody').innerHTML=Array.from({length:60},(_,i)=>`<tr><th scope="row"></th><td${i?'':' class="sel"'}></td>${'<td></td>'.repeat(7)}</tr>`).join('');});

define('pj-chart',`:host{display:flex;flex-direction:column;flex:1;min-width:0;background:#fff}.m{display:flex;flex:1;min-height:0}.p{display:flex;flex-direction:column;flex:1;min-width:0;overflow:hidden}.t{display:flex;height:41px;background:#e6e6e6;border-bottom:1px solid #ababab;color:#5f6368;overflow:hidden;flex:none}.w{width:182px;flex:none;padding-top:2px}.w:first-child{width:104px}.w p{margin:2px 0 0;height:18px;line-height:14px;padding-left:5px;border-right:1px solid #c8c8c8;white-space:nowrap}.w:first-child p{padding-left:1px}.d{display:flex}.d span{width:26px;height:18px;line-height:12px;text-align:center;border-right:1px solid #c8c8c8}.g{flex:1;background:linear-gradient(#6e6e6e,#6e6e6e) 0 23px/100% 1px no-repeat,linear-gradient(#8abb8c,#8abb8c) 259px 0/1px 100% no-repeat,repeating-linear-gradient(90deg,#fff 0 77px,#f6f6f6 77px 103px,#fff 103px 104px,#f6f6f6 104px 130px,#fff 130px 182px)}.hb{margin-right:17px}`,
 `<div class="m"><div class="p"><div class="t"></div><div class="g"></div></div><scroll-bar v style="--size:98%"></scroll-bar></div><scroll-bar class="hb" style="--size:50%"></scroll-bar>`,
 (h,r)=>{const t=r.querySelector('.t');
  ['08일','2024년 09월 15일','2024년 09월 22일','2024년 09월 29일','2024년 10월 06일','2024년 10월 13일','2024년 10월 20일'].forEach((n,i)=>{
   const days=[...'일월화수목금토'].slice(i?0:3);
   t.insertAdjacentHTML('beforeend',`<div class="w"><p>${n}</p><div class="d">${days.map(d=>`<span>${d}</span>`).join('')}</div></div>`);});});

define('pj-view',`:host{display:flex;flex:1;min-height:0;margin-top:3px;border-top:1px solid #b5b5b5;border-bottom:1px solid #c0c0c0;background:#e6e6e6}.d{width:4px;background:#e6e6e6;border-right:1px solid #b5b5b5}`,
 `<side-label green>GANTT 차트</side-label><pj-sheet></pj-sheet><div class="d"></div><pj-chart></pj-chart>`);

define('pj-status',`:host{display:flex;align-items:center;height:22px;padding-left:12px;background:#f3f3f3;border-bottom:1px solid #b4b4bb}.a{display:flex;align-items:center;gap:32px;padding-bottom:2px}.n{gap:3px}.v{display:flex;margin-left:auto;height:21px}.v button{width:40px}.v .on{background:#dcdcdc}.z{display:flex;align-items:center;gap:5px;margin:0 4px 0 5px}input{appearance:none;width:100px;height:16px;background:linear-gradient(#555,#555) 50% 50%/1px 5px no-repeat,linear-gradient(#555,#555) 0 50%/100% 1px no-repeat}input::-webkit-slider-thumb{appearance:none;width:5px;height:11px;background:#555;border:0;border-radius:0}svg{display:block}`,
 `<div class="a"><span>준비</span><button class="n"><ui-icon name="pin"></ui-icon>새 작업 : 수동 예약</button></div><div class="v"><button class="on" aria-label="Gantt 차트"><ui-icon name="vgantt"></ui-icon></button><button aria-label="작업 배정 현황"><ui-icon name="vusage"></ui-icon></button><button aria-label="팀 플래너"><ui-icon name="vteam"></ui-icon></button><button aria-label="자원 시트"><ui-icon name="vsheet"></ui-icon></button><button aria-label="보고서"><ui-icon name="vreport"></ui-icon></button></div>
 <div class="z"><svg width="9" height="9"><path d="M0 4.500h8" stroke="#333"/></svg><input type="range" aria-label="확대/축소" value="65"><svg width="9" height="9"><path d="M0 4.500h9M4.500 0v9" stroke="#333"/></svg></div>`);

define('tb-app',`:host{display:flex;position:relative;width:44px;height:38px;flex:none;font-size:12px}button{width:100%;justify-content:center}:host([wide]){width:180px}:host([wide]) button{justify-content:flex-start;padding-left:10px;gap:8px}span{white-space:nowrap}:host([on]){width:174px;background:#f1f4fc;border:1px solid #e2e4ef;border-radius:5px}:host([on]) button{padding-left:6px}:host([wide])::after{content:"";position:absolute;left:19px;bottom:-1px;width:6px;height:3px;border-radius:2px;background:#7f8893}:host([on])::after{left:10px;width:16px;bottom:0}`,
 `<button><span class="i"></span><span class="t"><slot></slot></span></button>`,
 (h,r)=>{r.querySelector('.i').replaceWith(icon(h.getAttribute('icon')));if(!h.hasAttribute('wide')){r.querySelector('.t').remove();r.querySelector('button').setAttribute('aria-label',h.getAttribute('icon'))}});
define('win-taskbar',`:host{display:flex;align-items:center;height:48px;padding-left:18px;border-bottom:1px solid #646464;background:linear-gradient(90deg,#d3e0f3 0,#cfe1ef 8%,#dcdfed 16%,#e4dff0 20%,#f2daed 23%,#efdbe9 28%,#f3dedb 32%,#e6def0 36%,#f6e0f3 40%,#efdcec 44%,#d5e1f1 50%,#d6e4f4 62%,#dfe6f6 74%,#dde9f7 85%,#e3eefa 100%)}.w{display:flex;width:417px;font-size:12px}.w button{gap:6px;text-align:left;line-height:15px;padding-bottom:2px}.w small{display:block;font-size:12px;color:#555}.s{display:flex;align-items:center;gap:11px;width:218px;height:31px;margin:0 3px 0 13px;padding:0 2px 0 11px;border-radius:16px;background:#fcf7fa;border:1px solid #e3d3df;border-bottom-color:#cfc2cc}.s input{flex:1;min-width:0;font-size:14px}.s input::placeholder{color:#5a5a5a;opacity:1}tb-app[on]{margin-left:1px}.r{display:flex;align-items:center;margin-left:auto;padding-right:20px}.r button{width:32px}.r .n{width:24px}.r .c{width:auto;line-height:16px;margin:0 6px 0 5px;padding-bottom:2px;flex-direction:column;align-items:flex-end}.r .b{width:18px}`,
 `<div class="w"><button><ui-icon name="cloud"></ui-icon><span>22°C<small>흐림</small></span></button></div>
 <button aria-label="시작"><ui-icon name="start"></ui-icon></button>
 <label class="s"><ui-icon name="wfind"></ui-icon><input aria-label="검색" placeholder="검색"><ui-icon name="panda"></ui-icon></label>
 <tb-app icon="taskview"></tb-app><tb-app icon="gear"></tb-app><tb-app icon="copilot"></tb-app><tb-app icon="teams"></tb-app><tb-app icon="store"></tb-app><tb-app icon="edge"></tb-app>
 <tb-app wide icon="monitor">Seung mo - 파일 탐색기</tb-app><tb-app wide icon="user">Seung mo - 파일 탐색기</tb-app><tb-app wide on icon="projapp">Project Professional - 프</tb-app>
 <div class="r"><button aria-label="숨겨진 아이콘"><ui-icon name="up"></ui-icon></button><button aria-label="USB"><ui-icon name="usb"></ui-icon></button><button aria-label="Bluetooth"><ui-icon name="bt"></ui-icon></button><button aria-label="입력기"><ui-icon name="ime"></ui-icon></button><button aria-label="네트워크"><ui-icon name="net"></ui-icon></button><button class="n" aria-label="소리"><ui-icon name="vol"></ui-icon></button><button class="c"><span>오후 2:40</span><span>2024-09-21 토요일</span></button><button class="b" aria-label="알림"><ui-icon name="bell"></ui-icon></button></div>`);

define('vm-status',`:host{display:flex;align-items:center;height:21px;padding-left:3px;background:#e3e4e6;color:#111;border-bottom:1px solid #f0f0f0}.r{display:flex;align-items:center;gap:6px;margin-left:auto}i{width:1px;height:16px;background:#fff;border-left:1px solid #aaa;box-sizing:content-box;margin-left:2px}.r ui-icon:nth-of-type(5){margin-right:6px}`,
 `<span>이 VM에 직접 입력하려면 마우스 포인터를 VM으로 이동하거나 Ctrl+G를 누르십시오.</span><div class="r"><ui-icon name="disk"></ui-icon><ui-icon name="cd"></ui-icon><ui-icon name="lan"></ui-icon><ui-icon name="snd"></ui-icon><i></i><ui-icon name="note"></ui-icon><ui-icon name="grip"></ui-icon></div>`);

define('vm-window',`:host{display:flex;flex-direction:column;height:100vh}main{display:flex;flex-direction:column;flex:1;min-height:0;margin:0 2px 0 1px;border:solid #646464;border-width:1px 0 0 1px}`,
 `<vm-titlebar></vm-titlebar><vm-menubar></vm-menubar><main><vm-tabs></vm-tabs><pj-titlebar></pj-titlebar><pj-tabs></pj-tabs><pj-ribbon></pj-ribbon><pj-timeline></pj-timeline><pj-view></pj-view><pj-status></pj-status><win-taskbar></win-taskbar></main><vm-status></vm-status>`);
</script>
</body>
</html>
